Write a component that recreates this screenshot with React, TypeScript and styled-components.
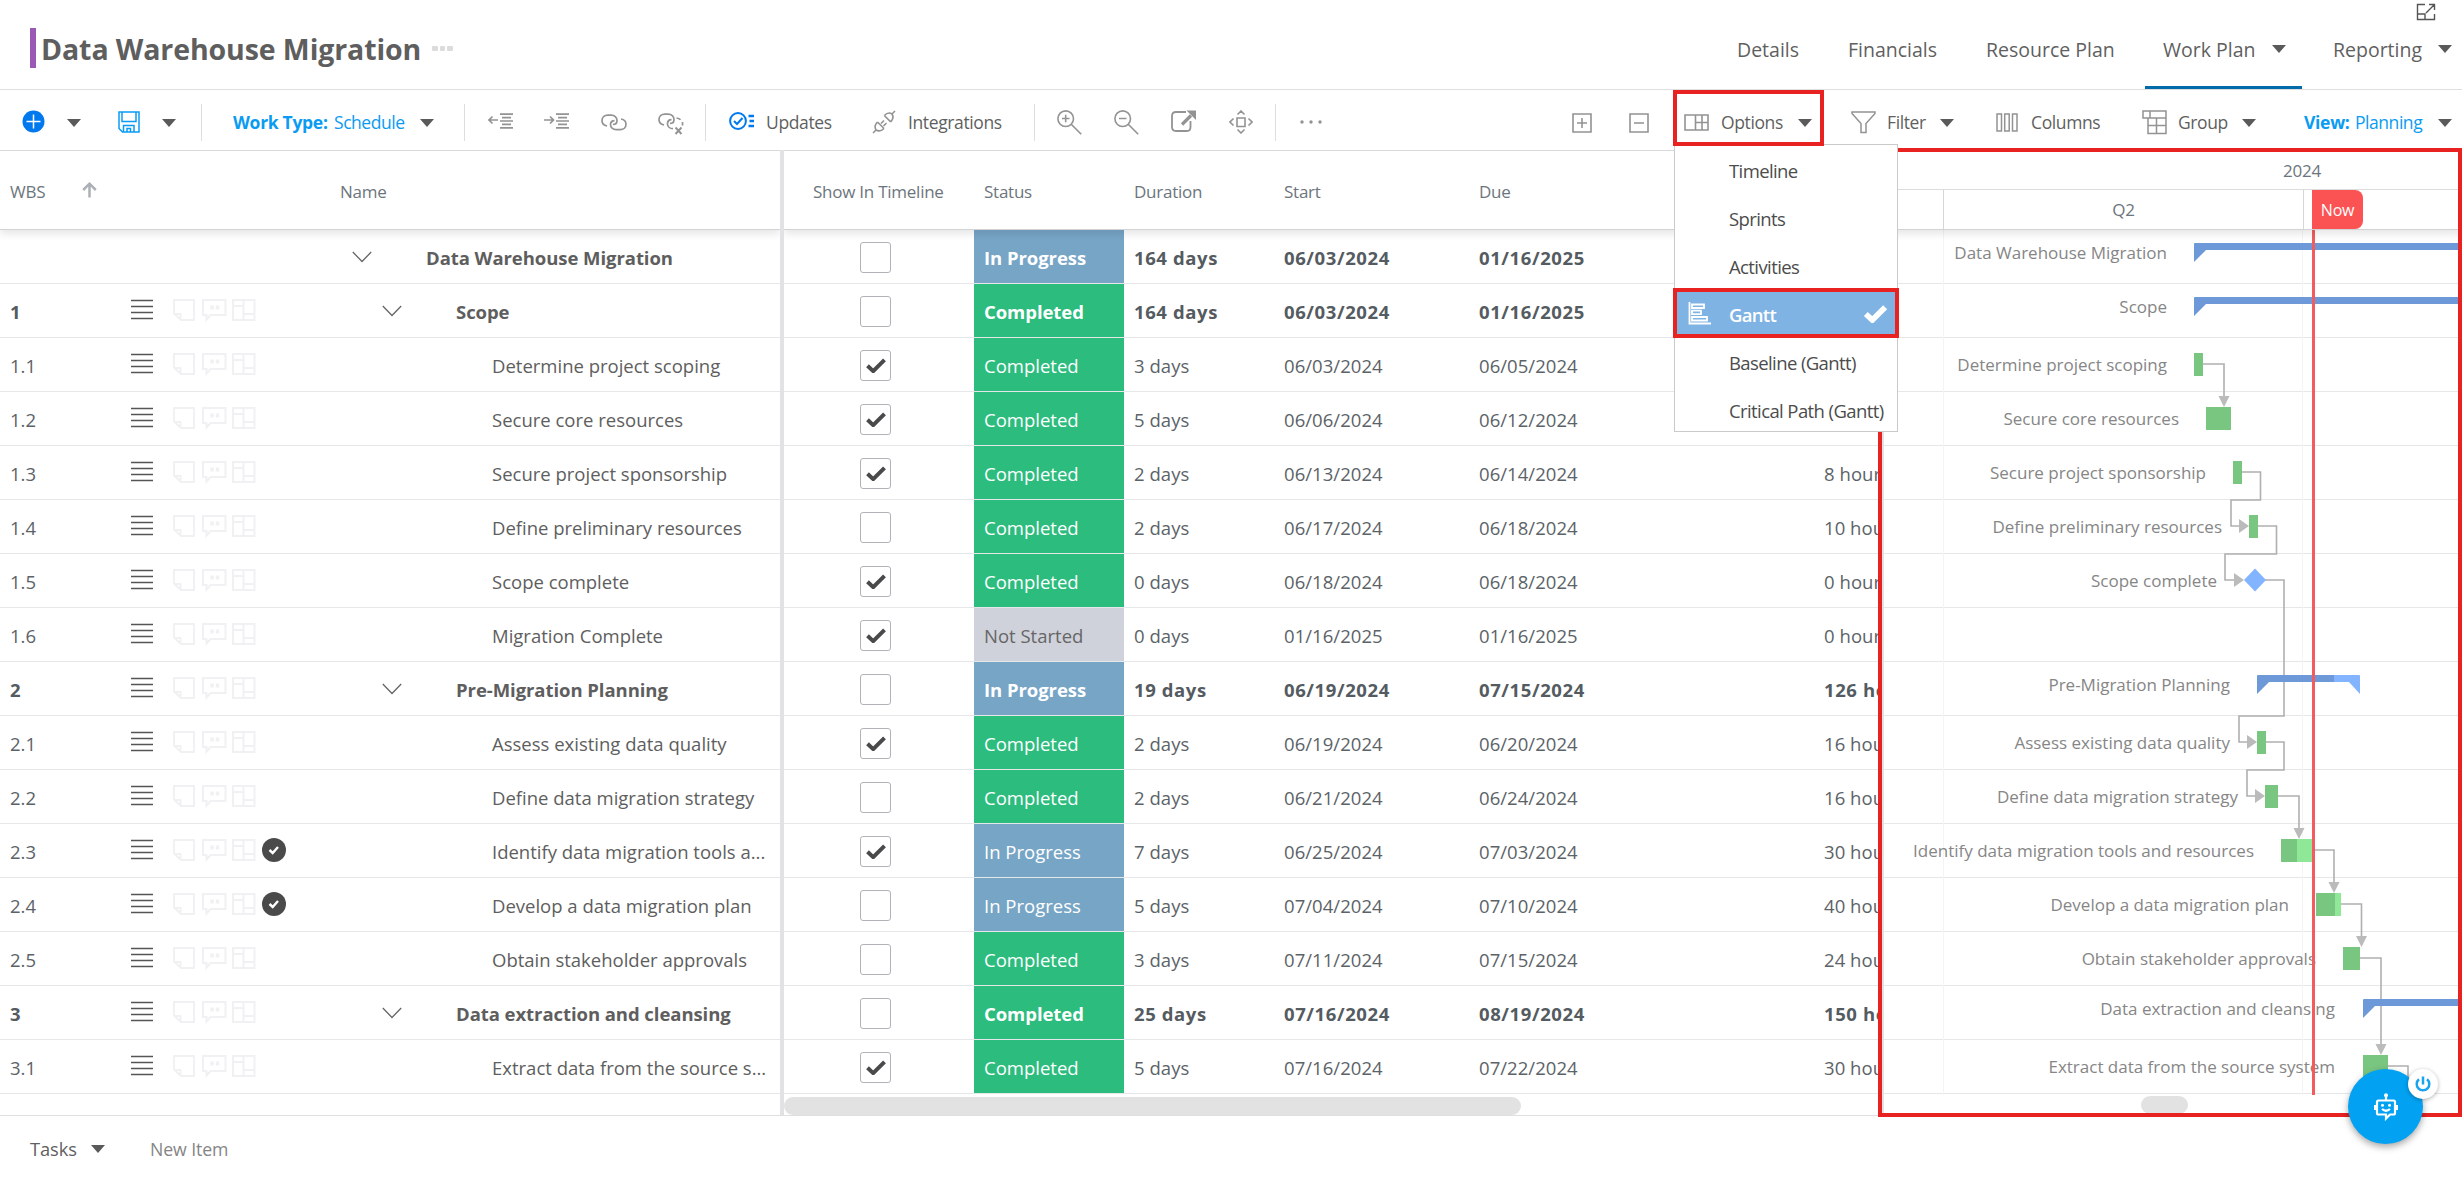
import React from 'react';
import styled, { createGlobalStyle, css } from 'styled-components';

const GlobalStyle = createGlobalStyle`
  * { box-sizing: border-box; }
  body { margin: 0; background: #fff; font-family: 'Open Sans', 'Noto Sans', sans-serif; overflow: hidden; }
  svg { display: block; flex: none; }
`;

const RED = '#e82121';
const GREY = '#939393';
const LINE = '#e6e7e9';

const Page = styled.div`
  position: relative;
  width: 2462px;
  height: 1183px;
  display: flex;
  flex-direction: column;
  overflow: hidden;
  color: #5f5f5f;
  white-space: nowrap;
`;

/* ---------- page header ---------- */
const PageHeader = styled.header`
  height: 90px;
  flex: none;
  display: flex;
  border-bottom: 1px solid #dfdfe1;
`;
const TitleArea = styled.div`
  display: flex;
  align-items: flex-start;
  padding: 28px 0 0 30px;
  width: 1737px;
`;
const TitleBar = styled.div`
  width: 6px;
  height: 40px;
  background: #9b59b6;
`;
const Title = styled.h1`
  margin: 0 0 0 5px;
  width: 391px;
  font-size: 28.5px;
  line-height: 42px;
  font-weight: 700;
  letter-spacing: -0.1px;
  color: #5e5e5e;
`;
const TitleDots = styled.div`
  display: flex;
  gap: 2px;
  margin-top: 18px;
  & > i { width: 5.5px; height: 5px; border-radius: 1px; background: #dcdcdc; }
`;
const Tabs = styled.nav`
  display: flex;
  flex: 1;
`;
const Tab = styled.div<{ $w: number; $ml?: number; $active?: boolean }>`
  width: ${p => p.$w}px;
  margin-left: ${p => p.$ml ?? 0}px;
  display: flex;
  align-items: flex-start;
  padding-top: 35px;
  font-size: 19.5px;
  line-height: 29px;
  ${p => p.$active && css`
    padding-left: 18px;
    border-bottom: 3px solid #006bab;
  `}
`;
const CaretShape = styled.div<{ $ml?: number; $mt?: number }>`
  flex: none;
  width: 0;
  height: 0;
  margin-left: ${p => p.$ml ?? 0}px;
  margin-top: ${p => p.$mt ?? 0}px;
  border: 7.5px solid transparent;
  border-top: 8px solid #5a5a5a;
  border-bottom: 0;
`;
const ExpandIcon = styled.div`
  position: absolute;
  left: 2416px;
  top: 3px;
`;

/* ---------- toolbar ---------- */
const Toolbar = styled.div`
  height: 61px;
  flex: none;
  display: flex;
  align-items: center;
  border-bottom: 1px solid #d9d9db;
  font-size: 17.5px;
  letter-spacing: -0.38px;
`;
const Item = styled.div<{ $ml: number; $w: number; $dy?: number }>`
  flex: none;
  width: ${p => p.$w}px;
  margin-left: ${p => p.$ml}px;
  padding-top: ${p => (p.$dy ?? 0) * 2}px;
  line-height: 26px;
`;
const Accent = styled(Item)<{ $bold?: boolean }>`
  color: #0a9bf2;
  font-weight: ${p => (p.$bold ? 700 : 400)};
  letter-spacing: ${p => (p.$bold ? -0.3 : -0.45)}px;
`;
const Sep = styled.div<{ $ml: number }>`
  width: 1px;
  height: 37px;
  flex: none;
  margin: 5px 0 0 ${p => p.$ml}px;
  background: #dedee0;
`;

/* ---------- grid ---------- */
const Grid = styled.main`
  height: 965px;
  flex: none;
  display: flex;
  border-bottom: 1px solid #dfdfe1;
`;
const Pane = styled.section<{ $w: number }>`
  width: ${p => p.$w}px;
  flex: none;
  overflow: hidden;
  display: flex;
  flex-direction: column;
`;
const Divider = styled.div<{ $w: number }>`
  width: ${p => p.$w}px;
  flex: none;
  margin-top: -1px;
  background: #e2e2e5;
`;
const Head = styled.div`
  height: 79px;
  flex: none;
  display: flex;
  align-items: center;
  border-bottom: 1px solid #d3d3d5;
  box-shadow: 0 4px 8px rgba(0, 0, 0, 0.1);
  font-size: 17px;
  letter-spacing: -0.25px;
  color: #6c757d;
  background: #fff;
  z-index: 1;
`;
const HeadCell = styled.div<{ $w: number; $pl?: number }>`
  width: ${p => p.$w}px;
  padding: 2px 0 0 ${p => p.$pl ?? 0}px;
  flex: none;
`;
const Row = styled.div<{ $bold?: boolean }>`
  height: 54px;
  flex: none;
  display: flex;
  align-items: center;
  border-bottom: 1px solid ${LINE};
  font-size: 18.5px;
  font-weight: ${p => (p.$bold ? 700 : 400)};
  letter-spacing: ${p => (p.$bold ? '-0.06px' : '0')};
  color: ${p => (p.$bold ? '#545b61' : '#5c6368')};
`;
const Wbs = styled.div`
  width: 131px;
  padding: 2px 0 0 10px;
`;
const Tools = styled.div`
  width: 209px;
  height: 24px;
  display: flex;
  align-items: center;
  margin-top: -1px;
`;
const NameCell = styled.div<{ $level: number }>`
  display: flex;
  align-items: center;
  padding-left: ${p => [12, 42, 152][p.$level]}px;
`;
const NameText = styled.span<{ $ml: number }>`
  margin-left: ${p => p.$ml}px;
  padding-top: 2px;
  color: #5e5e5e;
`;
const CheckCell = styled.div`
  width: 190px;
  padding-left: 76px;
`;
const Box = styled.div`
  width: 31px;
  height: 31px;
  margin-top: 1px;
  border: 1.5px solid #b2b3b9;
  border-radius: 3px;
  display: flex;
  align-items: center;
  justify-content: center;
`;
const STATUS: Record<string, [string, string]> = {
  'In Progress': ['#77a5c6', '#fff'],
  Completed: ['#2bbc7e', '#fff'],
  'Not Started': ['#cfd2da', '#666'],
};
const Status = styled.div<{ $s: string }>`
  width: 150px;
  height: 53px;
  padding: 2px 0 0 10px;
  display: flex;
  align-items: center;
  background: ${p => STATUS[p.$s][0]};
  color: ${p => STATUS[p.$s][1]};
`;
const Cell = styled.div<{ $w: number; $pl?: number; $wide?: boolean }>`
  width: ${p => p.$w}px;
  flex: none;
  padding: 2px 0 0 ${p => p.$pl ?? 0}px;
  overflow: hidden;
  letter-spacing: ${p => (p.$wide ? '0.6px' : '0.05px')};
`;
const ScrollTrack = styled.div`
  height: 21px;
  padding-top: 3px;
`;
const Thumb = styled.div<{ $w: number; $ml?: number }>`
  width: ${p => p.$w}px;
  height: 18px;
  margin-left: ${p => p.$ml ?? 0}px;
  border-radius: 9px;
  background: #e2e2e2;
`;

/* ---------- gantt ---------- */
const GanttHead = styled(Head)`
  flex-direction: column;
  align-items: stretch;
`;
const Year = styled.div`
  height: 39px;
  padding: 0 0 0 399px;
  line-height: 40px;
  border-bottom: 1px solid #dcdcde;
`;
const Quarters = styled.div`
  height: 39px;
  display: flex;
`;
const Quarter = styled.div<{ $w: number }>`
  width: ${p => p.$w}px;
  text-align: center;
  line-height: 40px;
  border-right: 1px solid #d6d6d8;
`;
const NowBadge = styled.div`
  margin-left: 8px;
  width: 51px;
  height: 39px;
  border-radius: 0 8px 8px 0;
  background: #fb5353;
  color: #fff;
  text-align: center;
  font-size: 16px;
  line-height: 41px;
`;
const GanttBody = styled.div`
  height: 885px;
  flex: none;
  & text { font: 400 17px 'Open Sans', 'Noto Sans', sans-serif; fill: #868686; }
`;

/* ---------- footer ---------- */
const Footer = styled.footer`
  flex: 1;
  display: flex;
  align-items: flex-start;
  padding: 18px 0 0 30px;
  font-size: 18.3px;
  line-height: 26px;
`;
const FootText = styled.div<{ $w: number; $soft?: boolean }>`
  width: ${p => p.$w}px;
  padding-top: 2px;
  letter-spacing: -0.1px;
  ${p => p.$soft && css`
    margin-left: 45px;
    font-size: 17.7px;
    color: #858585;
  `}
`;

/* ---------- layers above the page ---------- */
const Frame = styled.div<{ $x: number; $y: number; $w: number; $h: number }>`
  position: absolute;
  left: ${p => p.$x}px;
  top: ${p => p.$y}px;
  width: ${p => p.$w}px;
  height: ${p => p.$h}px;
  border: 4px solid ${RED};
  z-index: 6;
`;
const GanttFrame = styled(Frame)`
  z-index: 3;
`;
const Menu = styled.div`
  position: absolute;
  left: 1674px;
  top: 144px;
  width: 224px;
  height: 288px;
  border: 1px solid #cacaca;
  background: #fff;
  z-index: 4;
  display: flex;
  flex-direction: column;
`;
const MenuItem = styled.div<{ $on?: boolean }>`
  height: 48px;
  flex: none;
  display: flex;
  align-items: center;
  padding-left: 13px;
  font-size: 18.5px;
  letter-spacing: ${p => (p.$on ? '-0.7px' : '-0.6px')};
  font-weight: ${p => (p.$on ? 600 : 400)};
  color: ${p => (p.$on ? '#fff' : '#4c4c4c')};
  background: ${p => (p.$on ? '#7fb3e4' : 'transparent')};
`;
const MenuIcon = styled.div`
  width: 41px;
`;
const MenuText = styled.div`
  width: 134px;
  padding-top: 2px;
`;
const Chat = styled.div`
  position: absolute;
  left: 2348px;
  top: 1069px;
  width: 75px;
  height: 75px;
  border-radius: 50%;
  background: #03a1f2;
  box-shadow: 0 3px 7px rgba(0, 0, 0, 0.35);
  z-index: 7;
  display: flex;
  align-items: center;
  justify-content: center;
`;
const Power = styled.div`
  position: absolute;
  left: 2408px;
  top: 1069px;
  width: 30px;
  height: 30px;
  border-radius: 50%;
  background: #fff;
  box-shadow: 0 1px 4px rgba(0, 0, 0, 0.3);
  z-index: 8;
  display: flex;
  align-items: center;
  justify-content: center;
`;

/* ---------- icons ---------- */
type IconProps = { w: number; h: number; c?: string; sw?: number; children: React.ReactNode };
const Icon = ({ w, h, c = GREY, sw = 1.5, children }: IconProps) => (
  <svg width={w} height={h} viewBox={`0 0 ${w} ${h}`} fill="none" stroke={c} strokeWidth={sw}>{children}</svg>
);

const PlusCircle = () => (
  <Icon w={23} h={23} c="#fff"><circle cx="11.5" cy="11.5" r="11" fill="#0078ee" stroke="none" /><path d="M11.5 4.5v14M4.5 11.5h14" /></Icon>
);
const Save = () => (
  <Icon w={22} h={22} c="#0a9cf4" sw={1.5}><path d="M1 1h20v20H4.5L1 17.5zM4 1v9.5h14V1M5.5 21v-6.500h10.500v6.500M9 21v-3.500h3.500V21" /></Icon>
);
const Outdent = () => (
  <Icon w={25} h={16} sw={1.7}><path d="M1 7h9M4.500 3.500L1 7l3.500 3.500M12 1.200h13M14 4.600h9M12 8h13M14 11.400h9M12 14.800h13" /></Icon>
);
const Indent = () => (
  <Icon w={25} h={16} sw={1.7}><path d="M0 7h9M6 3.500L9.500 7 6 10.500M12 1.200h13M14 4.600h9M12 8h13M14 11.400h9M12 14.800h13" /></Icon>
);
const LinkIcon = () => (
  <Icon w={26} h={17} sw={1.7}>
    <path d="M6 12C3 11.500 1 9.300 1 6.600 1 3.400 3.500 1.200 6.800 1.200h3.400c3.300 0 5.800 2.300 5.800 5.200 0 2.300-1.700 4-4 4" />
    <path d="M20 5c3 .5 5 2.500 5 5.200 0 3.200-2.500 5.500-5.800 5.500h-4c-3.300 0-5.700-2.300-5.700-5 0-2.300 1.700-4 4-4" />
  </Icon>
);
const UnlinkIcon = () => (
  <Icon w={26} h={22} sw={1.7}>
    <path d="M6 12C3 11.500 1 9.300 1 6.600 1 3.400 3.500 1.200 6.800 1.200h3.400c3.300 0 5.800 2.300 5.800 5.200 0 2.300-1.700 4-4 4" />
    <path d="M18.500 5c1.500.2 3 .7 4 1.800M24.500 9v3.500M15 15.700c-3.300 0-5.500-2.300-5.500-5 0-2.300 1.700-4 4-4" />
    <path d="M17.500 14.500l6 6.500M23.500 14.500l-6 6.500" strokeWidth="1.900" />
  </Icon>
);
const UpdatesIcon = () => (
  <Icon w={26} h={18} c="#0078ee" sw={2}>
    <circle cx="9" cy="9" r="7.900" /><path d="M5 9l3 3 5.500-6" />
    <path d="M19.500 4h5.500M20.500 9h4.500M19.500 14h5.500" strokeWidth="2.600" />
  </Icon>
);
const PlugIcon = () => (
  <Icon w={24} h={24} sw={1.6}>
    <path d="M1 23l3-3M5.500 12l6.500 6.500M5.500 12c-2.500 2.500-3 5.500-1.500 8 2.500 1.500 5.500 1 8-1.500M9 13.500l3-3M11.500 16l3-3" />
    <path d="M23 1l-3 3M12.300 5.500l6.400 6.400M12.300 5.500c2.500-2.500 5.500-3 7.700-1.500 1.500 2.300 1 5.400-1.300 7.900" />
  </Icon>
);
const Zoomer = ({ plus }: { plus?: boolean }) => (
  <Icon w={25} h={25} sw={1.6}><circle cx="8.700" cy="8.700" r="7.800" /><path d={`M14.200 14.200l10 10M5 8.500h7.500${plus ? 'M8.700 4.700v7.500' : ''}`} /></Icon>
);
const OpenIcon = () => (
  <Icon w={26} h={22} sw={1.8}>
    <path d="M15 2H5Q1 2 1 6v11q0 4 4 4h11q3.500 0 3.500-4v-6" /><path d="M11 14.500L20 5.500" strokeWidth="3.200" />
    <path d="M15.500 .5h9.500v9.500z" fill={GREY} stroke="none" />
  </Icon>
);
const MoveIcon = () => (
  <Icon w={24} h={24} sw={1.6}><path d="M8 8h8v8.500H8zM8.500 4.500L12 1l3.500 3.500M8.500 19.500L12 23l3.500-3.500M4.500 8.500L1 12l3.500 3.500M19.500 8.500L23 12l-3.500 3.500" /></Icon>
);
const Dots = () => (
  <Icon w={23} h={4}><g fill={GREY} stroke="none"><circle cx="2" cy="2" r="1.700" /><circle cx="11" cy="2" r="1.700" /><circle cx="20" cy="2" r="1.700" /></g></Icon>
);
const BoxIcon = ({ plus }: { plus?: boolean }) => (
  <Icon w={20} h={20} sw={1.6}><path d={`M1 1h18v18H1zM5 10h10${plus ? 'M10 5v10' : ''}`} /></Icon>
);
const OptionsIcon = () => (
  <Icon w={25} h={17} sw={1.6}><path d="M1 1h23v15H1zM11.500 1v15M18 1v15M11.500 8.500H24" /></Icon>
);
const FilterIcon = () => (
  <Icon w={25} h={23}><path d="M1 1h23v1.500l-9 10V21.500H10V12.500L1 2.500z" /></Icon>
);
const ColumnsIcon = () => (
  <Icon w={22} h={19}><path d="M1 1h4.500v17H1zM8.700 1h4.500v17H8.700zM16.500 1H21v17h-4.500z" /></Icon>
);
const GroupIcon = () => (
  <Icon w={25} h={25}><path d="M1 1h23v7H1zM8 1v7M6 8v15.500h18V8M6 15.500h18M14.500 8v15.500" /></Icon>
);
const GanttIcon = () => (
  <Icon w={23} h={23} c="#fff" sw={1.800}><path d="M1.500 0v21.500H23M4 2.500h12v3.500H4zM4 8.700h9v3.500H4zM4 15h15v3.500H4z" /></Icon>
);
const Tick = ({ w = 22, c = '#4a4a4a' }: { w?: number; c?: string }) => (
  <svg width={w} height={w * 0.76} viewBox="0 0 22 16.700"><path d="M2.500 8.800l5.700 5.300L19.500 2.800" fill="none" stroke={c} strokeWidth={c === '#fff' ? 5 : 4} /></svg>
);
const Chevron = () => (
  <Icon w={20} h={12} c="#666" sw={1.300}><path d="M.8 1l9.200 9.500L19.200 1" /></Icon>
);
const SortArrow = () => (
  <Icon w={15} h={16} c="#adb0b5" sw={2.500}><path d="M7.500 15.500V2M1.200 8l6.300-6.300L13.800 8" /></Icon>
);
const RowIcons = ({ done }: { done?: boolean }) => (
  <Icon w={156} h={26} c="#f1f1f3" sw={2}>
    <g stroke="#555" strokeWidth="1.700"><path d="M0 3.500h22M0 9.500h22M0 15.500h22M0 21.500h22" /></g>
    <path d="M43 3h20v20H50l-7-6.500zM43 17h6.500v6" />
    <path d="M72 3h22.500v15H79.500l-4 4.500V18H72z" />
    <path d="M81 8.500v4M86.500 8.500v4" strokeWidth="3.500" />
    <path d="M102 3h21.500v20H102zM112.500 3v20M102 9h10.500M112.500 17h11" />
    {done && <><circle cx="143" cy="13" r="12" fill="#4a4a4a" stroke="none" /><path d="M138.500 13l3.200 3 5.300-6" stroke="#fff" strokeWidth="2.400" /></>}
  </Icon>
);
const Robot = () => (
  <Icon w={24} h={28} c="#fff" sw={2.200}>
    <path d="M4.500 7.500h15q1.500 0 1.500 1.500v11q0 1.500-1.500 1.500H16L12 25.500V21.500H4.500Q3 21.500 3 20V9q0-1.500 1.500-1.500zM12 7.500V3M8 16q4 3.500 8 0" />
    <path d="M1 12v5M23 12v5" strokeWidth="2" />
    <g fill="#fff" stroke="none"><circle cx="12" cy="2.300" r="2" /><circle cx="8.500" cy="12.300" r="1.500" /><circle cx="15.500" cy="12.300" r="1.500" /></g>
  </Icon>
);
const PowerIcon = () => (
  <Icon w={18} h={18} c="#18a4ee" sw={2.500}><path d="M9 1.500v8M5 4.200a6.300 6.300 0 1 0 8 0" /></Icon>
);

/* ---------- data ---------- */
type Task = { wbs: string; level: number; name: string; check: boolean; status: string; dur: string; start: string; due: string; hrs: string; done?: boolean };
const t = (wbs: string, level: number, name: string, check: number, status: string, dur: string, start: string, due: string, hrs: string, done = false): Task =>
  ({ wbs, level, name, check: !!check, status, dur, start, due, hrs, done });
const C = 'Completed', P = 'In Progress', N = 'Not Started';
const tasks: Task[] = [
  t('', 0, 'Data Warehouse Migration', 0, P, '164 days', '06/03/2024', '01/16/2025', ''),
  t('1', 1, 'Scope', 0, C, '164 days', '06/03/2024', '01/16/2025', ''),
  t('1.1', 2, 'Determine project scoping', 1, C, '3 days', '06/03/2024', '06/05/2024', ''),
  t('1.2', 2, 'Secure core resources', 1, C, '5 days', '06/06/2024', '06/12/2024', ''),
  t('1.3', 2, 'Secure project sponsorship', 1, C, '2 days', '06/13/2024', '06/14/2024', '8 hours'),
  t('1.4', 2, 'Define preliminary resources', 0, C, '2 days', '06/17/2024', '06/18/2024', '10 hours'),
  t('1.5', 2, 'Scope complete', 1, C, '0 days', '06/18/2024', '06/18/2024', '0 hours'),
  t('1.6', 2, 'Migration Complete', 1, N, '0 days', '01/16/2025', '01/16/2025', '0 hours'),
  t('2', 1, 'Pre-Migration Planning', 0, P, '19 days', '06/19/2024', '07/15/2024', '126 hours'),
  t('2.1', 2, 'Assess existing data quality', 1, C, '2 days', '06/19/2024', '06/20/2024', '16 hours'),
  t('2.2', 2, 'Define data migration strategy', 0, C, '2 days', '06/21/2024', '06/24/2024', '16 hours'),
  t('2.3', 2, 'Identify data migration tools a...', 1, P, '7 days', '06/25/2024', '07/03/2024', '30 hours', true),
  t('2.4', 2, 'Develop a data migration plan', 0, P, '5 days', '07/04/2024', '07/10/2024', '40 hours', true),
  t('2.5', 2, 'Obtain stakeholder approvals', 0, C, '3 days', '07/11/2024', '07/15/2024', '24 hours'),
  t('3', 1, 'Data extraction and cleansing', 0, C, '25 days', '07/16/2024', '08/19/2024', '150 hours'),
  t('3.1', 2, 'Extract data from the source s...', 1, C, '5 days', '07/16/2024', '07/22/2024', '30 hours'),
];

/* Chart coordinates: x from the chart's left edge, y from the first row's top. */
type Bar = { row: number; label: string; end: number; x: number; w: number; kind?: 'sum' | 'mile'; prog?: number; open?: boolean };
const bars: Bar[] = [
  { row: 0, label: 'Data Warehouse Migration', end: 283, x: 310, w: 280, kind: 'sum', open: true },
  { row: 1, label: 'Scope', end: 283, x: 310, w: 280, kind: 'sum', open: true },
  { row: 2, label: 'Determine project scoping', end: 283, x: 310, w: 9 },
  { row: 3, label: 'Secure core resources', end: 295, x: 322, w: 25 },
  { row: 4, label: 'Secure project sponsorship', end: 322, x: 349, w: 9 },
  { row: 5, label: 'Define preliminary resources', end: 338, x: 365, w: 9 },
  { row: 6, label: 'Scope complete', end: 333, x: 360, w: 22, kind: 'mile' },
  { row: 8, label: 'Pre-Migration Planning', end: 346, x: 373, w: 103, kind: 'sum', prog: 77 },
  { row: 9, label: 'Assess existing data quality', end: 346, x: 373, w: 9 },
  { row: 10, label: 'Define data migration strategy', end: 354, x: 381, w: 13 },
  { row: 11, label: 'Identify data migration tools and resources', end: 370, x: 397, w: 32, prog: 16 },
  { row: 12, label: 'Develop a data migration plan', end: 405, x: 432, w: 25, prog: 19 },
  { row: 13, label: 'Obtain stakeholder approvals', end: 432, x: 459, w: 17 },
  { row: 14, label: 'Data extraction and cleansing', end: 451, x: 479, w: 280, kind: 'sum', open: true },
  { row: 15, label: 'Extract data from the source system', end: 451, x: 479, w: 25 },
];
const links: { d: string; tip?: [number, number, 'd' | 'r'] }[] = [
  { d: 'M319 134H340V168', tip: [340, 177, 'd'] },
  { d: 'M358 242H376.500V270H347V296H357', tip: [365, 296, 'r'] },
  { d: 'M374 296H392.500V324H341V350H352', tip: [360, 350, 'r'] },
  { d: 'M381 350H400V486H355V512H365', tip: [373, 512, 'r'] },
  { d: 'M382 512H400V540H363V566H373', tip: [381, 566, 'r'] },
  { d: 'M394 566H415V600', tip: [415, 609, 'd'] },
  { d: 'M429 620H450V654', tip: [450, 663, 'd'] },
  { d: 'M457 674H477.500V708', tip: [477.5, 717, 'd'] },
  { d: 'M476 728H497V816', tip: [497, 825, 'd'] },
  { d: 'M504 836H524V863' },
];

const BarShape = ({ b }: { b: Bar }) => {
  const top = b.row * 54;
  if (b.kind === 'mile') {
    const cx = b.x + 11, cy = top + 26;
    return <path d={`M${cx} ${cy - 11.5}L${cx + 11} ${cy}L${cx} ${cy + 11.5}L${cx - 11} ${cy}z`} fill="#82b4ff" />;
  }
  if (b.kind === 'sum') {
    const dark = '#6e99d8', x = b.x, y = top + 13, w = b.prog ?? b.w;
    return (
      <g>
        <path d={`M${x} ${y + 1}q0-1 1-1H${x + w}v7H${x + 12}L${x} ${y + 19}z`} fill={dark} />
        {!b.open && <path d={`M${x + w} ${y}H${x + b.w - 1}q1 0 1 1v18l-11-12H${x + w}z`} fill="#82b4ff" />}
      </g>
    );
  }
  return (
    <g>
      <rect x={b.x} y={top + 15} width={b.w} height={23} fill="#8ee897" />
      <rect x={b.x} y={top + 15} width={b.prog ?? b.w} height={23} fill="#79c680" />
    </g>
  );
};

const Chart = () => (
  <svg width={578} height={866} viewBox="0 0 578 866">
    {tasks.map((_, i) => <rect key={i} x={0} y={i * 54 + 53} width={578} height={1} fill={LINE} />)}
    <path d="M59.500 0V865M418.500 0V865" stroke="#f4f4f5" />
    {bars.map(b => (
      <text key={b.row} x={b.end} y={b.row * 54 + (b.kind === 'sum' ? 29 : 33)} textAnchor="end">{b.label}</text>
    ))}
    {links.map((l, i) => (
      <g key={i}>
        <path d={l.d} fill="none" stroke="#b0b0b0" strokeWidth="1.600" />
        {l.tip && (l.tip[2] === 'd'
          ? <path d={`M${l.tip[0]} ${l.tip[1]}l-5.500-11h11z`} fill="#bbb" />
          : <path d={`M${l.tip[0]} ${l.tip[1]}l-10-7v14z`} fill="#bbb" />)}
      </g>
    ))}
    {bars.map(b => <BarShape key={b.row} b={b} />)}
    <rect x={428} y={0} width={3} height={865} fill="#f25c5f" />
  </svg>
);

export default function App() {
  return (
    <Page>
      <GlobalStyle />
      <PageHeader>
        <TitleArea>
          <TitleBar />
          <Title>Data Warehouse Migration</Title>
          <TitleDots><i /><i /><i /></TitleDots>
        </TitleArea>
        <Tabs>
          <Tab $w={62}>Details</Tab>
          <Tab $w={89} $ml={49}>Financials</Tab>
          <Tab $w={129} $ml={49}>Resource Plan</Tab>
          <Tab $w={157} $ml={30} $active>Work Plan<CaretShape $ml={17} $mt={10} /></Tab>
          <Tab $w={129} $ml={31}>Reporting<CaretShape $ml={16} $mt={10} /></Tab>
        </Tabs>
      </PageHeader>
      <ExpandIcon>
        <Icon w={20} h={18} c="#555" sw={1.400}><path d="M9 1.500H1.500v15h17V11M1.500 11h7.500v5.500M10 10l8-8M13 1.500h5.500V7" /></Icon>
      </ExpandIcon>

      <Toolbar>
        <Item $ml={22} $w={23} $dy={1}><PlusCircle /></Item>
        <Item $ml={22} $w={15} $dy={3}><CaretShape /></Item>
        <Item $ml={36} $w={22} $dy={2}><Save /></Item>
        <Item $ml={22} $w={15} $dy={3}><CaretShape /></Item>
        <Sep $ml={24} />
        <Accent $ml={31} $w={101} $dy={2} $bold>Work Type:</Accent>
        <Accent $ml={0} $w={72} $dy={2}>Schedule</Accent>
        <Item $ml={14} $w={15} $dy={3}><CaretShape /></Item>
        <Sep $ml={29} />
        <Item $ml={23} $w={25} $dy={1}><Outdent /></Item>
        <Item $ml={31} $w={25} $dy={1}><Indent /></Item>
        <Item $ml={32} $w={26} $dy={2}><LinkIcon /></Item>
        <Item $ml={31} $w={26} $dy={4}><UnlinkIcon /></Item>
        <Sep $ml={21} />
        <Item $ml={23} $w={26} $dy={1}><UpdatesIcon /></Item>
        <Item $ml={11} $w={66} $dy={2}>Updates</Item>
        <Item $ml={40} $w={24} $dy={2}><PlugIcon /></Item>
        <Item $ml={12} $w={96} $dy={2}>Integrations</Item>
        <Sep $ml={30} />
        <Item $ml={22} $w={25} $dy={2}><Zoomer plus /></Item>
        <Item $ml={32} $w={25} $dy={2}><Zoomer /></Item>
        <Item $ml={32} $w={26} $dy={1}><OpenIcon /></Item>
        <Item $ml={32} $w={24} $dy={2}><MoveIcon /></Item>
        <Sep $ml={22} />
        <Item $ml={24} $w={23} $dy={2}><Dots /></Item>
        <Item $ml={249} $w={20} $dy={3}><BoxIcon plus /></Item>
        <Item $ml={37} $w={20} $dy={3}><BoxIcon /></Item>
        <Item $ml={35} $w={25} $dy={2}><OptionsIcon /></Item>
        <Item $ml={12} $w={64} $dy={2}>Options</Item>
        <Item $ml={13} $w={15} $dy={3}><CaretShape /></Item>
        <Item $ml={38} $w={25} $dy={2}><FilterIcon /></Item>
        <Item $ml={11} $w={40} $dy={2}>Filter</Item>
        <Item $ml={13} $w={15} $dy={3}><CaretShape /></Item>
        <Item $ml={41} $w={22} $dy={2}><ColumnsIcon /></Item>
        <Item $ml={13} $w={71} $dy={2}>Columns</Item>
        <Item $ml={40} $w={25} $dy={2}><GroupIcon /></Item>
        <Item $ml={11} $w={51} $dy={2}>Group</Item>
        <Item $ml={13} $w={15} $dy={3}><CaretShape /></Item>
        <Accent $ml={47} $w={51} $dy={2} $bold>View:</Accent>
        <Accent $ml={0} $w={71} $dy={2}>Planning</Accent>
        <Item $ml={12} $w={15} $dy={3}><CaretShape /></Item>
      </Toolbar>

      <Grid>
        <Pane $w={780}>
          <Head>
            <HeadCell $w={82} $pl={10}>WBS</HeadCell>
            <SortArrow />
            <HeadCell $w={300} $pl={243}>Name</HeadCell>
          </Head>
          {tasks.map((r, i) => (
            <Row key={i} $bold={r.level < 2}>
              <Wbs>{r.wbs}</Wbs>
              <Tools>{r.wbs && <RowIcons done={r.done} />}</Tools>
              <NameCell $level={r.level}>
                {r.level < 2 && <Chevron />}
                <NameText $ml={r.level < 2 ? 54 : 0}>{r.name}</NameText>
              </NameCell>
            </Row>
          ))}
        </Pane>
        <Divider $w={4} />
        <Pane $w={1098}>
          <Head>
            <HeadCell $w={200} $pl={29}>Show In Timeline</HeadCell>
            <HeadCell $w={150}>Status</HeadCell>
            <HeadCell $w={150}>Duration</HeadCell>
            <HeadCell $w={195}>Start</HeadCell>
            <HeadCell $w={200}>Due</HeadCell>
          </Head>
          {tasks.map((r, i) => {
            const b = r.level < 2;
            return (
              <Row key={i} $bold={b}>
                <CheckCell><Box>{r.check && <Tick />}</Box></CheckCell>
                <Status $s={r.status}>{r.status}</Status>
                <Cell $w={160} $pl={10} $wide={b}>{r.dur}</Cell>
                <Cell $w={195} $wide={b}>{r.start}</Cell>
                <Cell $w={345} $wide={b}>{r.due}</Cell>
                <Cell $w={54} $wide={b}>{r.hrs}</Cell>
              </Row>
            );
          })}
          <ScrollTrack><Thumb $w={737} /></ScrollTrack>
        </Pane>
        <Divider $w={2} />
        <Pane $w={578}>
          <GanttHead>
            <Year>2024</Year>
            <Quarters>
              <Quarter $w={60} />
              <Quarter $w={360}>Q2</Quarter>
              <NowBadge>Now</NowBadge>
            </Quarters>
          </GanttHead>
          <GanttBody>
            <Chart />
            <Thumb $w={47} $ml={257} />
          </GanttBody>
        </Pane>
      </Grid>

      <Footer>
        <FootText $w={47}>Tasks</FootText>
        <CaretShape $ml={14} $mt={11} />
        <FootText $w={90} $soft>New Item</FootText>
      </Footer>

      <GanttFrame $x={1878} $y={148} $w={584} $h={969} />
      <Menu>
        <MenuItem><MenuIcon /><MenuText>Timeline</MenuText></MenuItem>
        <MenuItem><MenuIcon /><MenuText>Sprints</MenuText></MenuItem>
        <MenuItem><MenuIcon /><MenuText>Activities</MenuText></MenuItem>
        <MenuItem $on><MenuIcon><GanttIcon /></MenuIcon><MenuText>Gantt</MenuText><Tick w={25} c="#fff" /></MenuItem>
        <MenuItem><MenuIcon /><MenuText>Baseline (Gantt)</MenuText></MenuItem>
        <MenuItem><MenuIcon /><MenuText>Critical Path (Gantt)</MenuText></MenuItem>
      </Menu>
      <Frame $x={1673} $y={90} $w={151} $h={56} />
      <Frame $x={1673} $y={288} $w={226} $h={50} />
      <Chat><Robot /></Chat>
      <Power><PowerIcon /></Power>
    </Page>
  );
}
